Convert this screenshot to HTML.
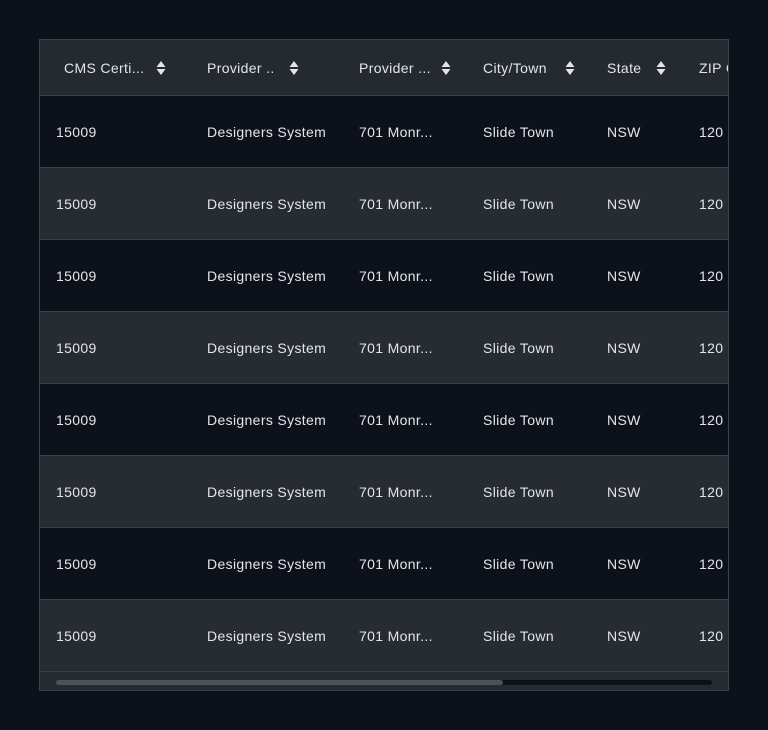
<!DOCTYPE html><html><head><style>
body{margin:0;width:768px;height:730px;background:#0d121a;font-family:"Liberation Sans",sans-serif;position:relative;overflow:hidden}
.t{position:absolute;left:39px;top:39px;width:688px;height:650px;border:1px solid #3a4148;overflow:hidden;background:#252b31}
.r{position:absolute;left:0;width:688px;border-bottom:1px solid #3a4148;box-sizing:border-box}
.c{position:absolute;top:50%;transform:translateY(-50%);color:#e2e6ea;font-size:14px;white-space:nowrap;letter-spacing:0.35px}
.h .c{font-weight:500}
.ic{position:absolute;top:50%;transform:translateY(-50%);width:10px;height:16px}
</style></head><body><div class="t">
<div class="r h" style="top:0;height:56px;background:#242a30">
<span class="c" style="left:24px">CMS Certi...</span><svg class="ic" style="left:116px" viewBox="0 0 10 16"><path d="M5 1L9.5 7H0.5Z M5 15L9.5 9H0.5Z" fill="#e2e6ea"/></svg>
<span class="c" style="left:167px">Provider ..</span><svg class="ic" style="left:249px" viewBox="0 0 10 16"><path d="M5 1L9.5 7H0.5Z M5 15L9.5 9H0.5Z" fill="#e2e6ea"/></svg>
<span class="c" style="left:319px">Provider ...</span><svg class="ic" style="left:401px" viewBox="0 0 10 16"><path d="M5 1L9.5 7H0.5Z M5 15L9.5 9H0.5Z" fill="#e2e6ea"/></svg>
<span class="c" style="left:443px">City/Town</span><svg class="ic" style="left:525px" viewBox="0 0 10 16"><path d="M5 1L9.5 7H0.5Z M5 15L9.5 9H0.5Z" fill="#e2e6ea"/></svg>
<span class="c" style="left:567px">State</span><svg class="ic" style="left:616px" viewBox="0 0 10 16"><path d="M5 1L9.5 7H0.5Z M5 15L9.5 9H0.5Z" fill="#e2e6ea"/></svg>
<span class="c" style="left:659px">ZIP Code</span>
</div>
<div id="rows"></div>
<div style="position:absolute;left:16px;top:640px;width:656px;height:5px;border-radius:3px;background:#0d121a"></div>
<div style="position:absolute;left:16px;top:640px;width:447px;height:5px;border-radius:3px;background:#4a535b"></div>
</div>
<script>
var h='';for(var i=0;i<8;i++){h+='<div class="r" style="top:'+(56+i*72)+'px;height:72px;background:'+(i%2?'#262c31':'#0d121a')+'"><span class="c" style="left:16px">15009</span><span class="c" style="left:167px">Designers System</span><span class="c" style="left:319px">701 Monr...</span><span class="c" style="left:443px">Slide Town</span><span class="c" style="left:567px">NSW</span><span class="c" style="left:659px">120</span></div>'}
document.getElementById('rows').outerHTML=h;
</script>
</body></html>
